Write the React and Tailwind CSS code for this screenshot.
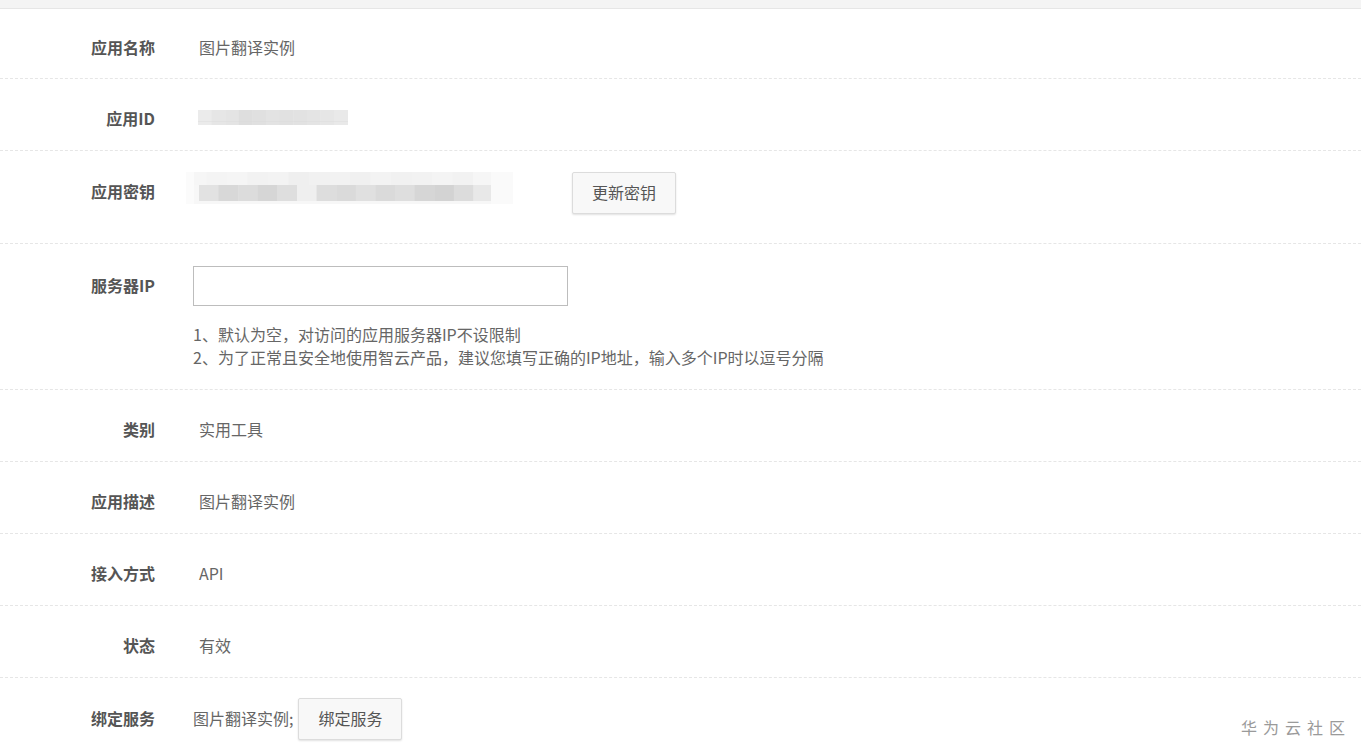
import React from "react";

const font = { fontFamily: '"Noto Sans CJK SC", "Noto Sans", sans-serif' };

function Label({ children }) {
  return (
    <div className="w-[155px] shrink-0 text-right text-[16px] font-bold text-[#555]">
      {children}
    </div>
  );
}

function Row({ label, children, h = "h-[72px]" }) {
  return (
    <div className={`flex ${h} items-center border-b border-dashed border-[#e6e6e6] pt-[6px]`}>
      <Label>{label}</Label>
      <div className="ml-[44px] text-[16px] text-[#666]">{children}</div>
    </div>
  );
}

function Btn({ children }) {
  return (
    <button className="h-[42px] rounded-[2px] border border-[#dcdcdc] bg-[#f8f8f8] px-[19px] pb-[2px] text-[16px] text-[#555] shadow-[0_1px_2px_rgba(0,0,0,0.12)]">
      {children}
    </button>
  );
}

function IdBlur() {
  const cells = ["#ebebeb", "#e6e6e6", "#e4e4e4", "#dedede", "#e0e0e0", "#e3e3e3", "#e1e1e1", "#e2e2e2", "#e4e4e4", "#e6e6e6", "#e9e9e9"];
  return (
    <svg width="150" height="15" viewBox="0 0 150 15">
      {cells.map((c, i) => (
        <rect key={i} x={i * 13.6} y="0" width="14" height="15" fill={c} />
      ))}
      <rect x="0" y="11" width="150" height="1" fill="#dadada" opacity="0.4" />
    </svg>
  );
}

function KeyBlur() {
  const top = ["#f6f6f6", "#f4f4f4", "#f5f5f5", "#f2f2f2", "#f3f3f3", "#efefef", "#f1f1f1", "#f2f2f2", "#f0f0f0", "#f3f3f3", "#f1f1f1", "#f2f2f2", "#f4f4f4", "#f2f2f2", "#f6f6f6", "#f8f8f8"];
  const band = ["#e2e2e2", "#d8d8d8", "#dcdcdc", "#d6d6d6", "#dedede", "#efefef", "#dddddd", "#dadada", "#e0e0e0", "#dadada", "#dedede", "#d6d6d6", "#d3d3d3", "#dcdcdc", "#e8e8e8"];
  return (
    <svg width="327" height="32" viewBox="0 0 327 32">
      {top.map((c, i) => (
        <rect key={"t" + i} x={i * 20.5} y="0" width="21" height="14" fill={c} />
      ))}
      <rect x="0" y="13" width="327" height="19" fill="#f7f7f7" />
      {band.map((c, i) => (
        <rect key={"b" + i} x={13 + i * 19.6} y="13" width="20" height="16" fill={c} />
      ))}
      <rect x="0" y="0" width="8" height="32" fill="#fbfbfb" />
      <rect x="305" y="0" width="22" height="32" fill="#fafafa" />
    </svg>
  );
}

export default function App() {
  return (
    <div className="relative min-h-[753px] w-full overflow-hidden bg-white" style={font}>
      <div className="h-[9px] border-b border-[#e6e6e6] bg-[#f4f4f4]" />

      <Row label="应用名称" h="h-[70px]">图片翻译实例</Row>
      <Row label="应用ID">
        <div className="flex h-[24px] items-center">
          <div className="-ml-[1px]">
            <IdBlur />
          </div>
        </div>
      </Row>

      <div className="flex h-[93px] items-start border-b border-dashed border-[#e6e6e6] pt-[21px]">
        <div className="flex h-[38px] items-center">
          <Label>应用密钥</Label>
        </div>
        <div className="ml-[31px] flex items-start">
          <KeyBlur />
          <div className="ml-[59px]">
            <Btn>更新密钥</Btn>
          </div>
        </div>
      </div>

      <div className="flex h-[146px] items-start border-b border-dashed border-[#e6e6e6] pt-[22px]">
        <div className="flex h-[38px] items-center">
          <Label>服务器IP</Label>
        </div>
        <div className="ml-[38px] flex flex-col">
          <input className="h-[40px] w-[375px] border border-[#bdbdbd] bg-white px-2 text-[16px] outline-none" />
          <div className="mt-[17px] text-[16px] leading-[23px] text-[#666]">
            <div>1、默认为空，对访问的应用服务器IP不设限制</div>
            <div>2、为了正常且安全地使用智云产品，建议您填写正确的IP地址，输入多个IP时以逗号分隔</div>
          </div>
        </div>
      </div>

      <Row label="类别">实用工具</Row>
      <Row label="应用描述">图片翻译实例</Row>
      <Row label="接入方式">API</Row>
      <Row label="状态">有效</Row>

      <div className="flex items-start pt-[20px]">
        <div className="flex h-[40px] items-center">
          <Label>绑定服务</Label>
        </div>
        <div className="ml-[38px] flex h-[42px] items-center text-[16px] text-[#666]">
          <span className="pb-[2px]">图片翻译实例;</span>
          <div className="ml-[5px]">
            <Btn>绑定服务</Btn>
          </div>
        </div>
      </div>

      <div className="absolute bottom-[14px] right-[10px] text-[16px] tracking-[6px] text-[#9a9a9a]">
        华为云社区
      </div>
    </div>
  );
}
